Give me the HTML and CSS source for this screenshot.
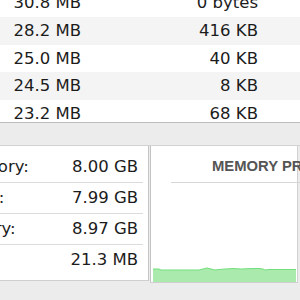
FILE: index.html
```html
<!DOCTYPE html>
<html lang="en">
<head>
<meta charset="UTF-8">
<title>Activity Monitor - Memory</title>
<link rel="stylesheet" href="styles.css">
</head>
<body>

<div class="window">
  <!-- process list (scrolled) -->
  <div class="table">
    <div class="row"><span class="cell mem">30.8 MB</span><span class="cell comp">0 bytes</span></div>
    <div class="row"><span class="cell mem">28.2 MB</span><span class="cell comp">416 KB</span></div>
    <div class="row"><span class="cell mem">25.0 MB</span><span class="cell comp">40 KB</span></div>
    <div class="row"><span class="cell mem">24.5 MB</span><span class="cell comp">8 KB</span></div>
    <div class="row"><span class="cell mem">23.2 MB</span><span class="cell comp">68 KB</span></div>
  </div>

  <div class="toolbar"></div>

  <div class="bottom">
    <div class="stats">
      <div class="stat"><span>Physical Memory:</span><span>8.00 GB</span></div>
      <div class="stat"><span>Memory Used:</span><span>7.99 GB</span></div>
      <div class="stat"><span>Virtual Memory:</span><span>8.97 GB</span></div>
      <div class="stat"><span>Swap Used:</span><span>21.3 MB</span></div>
    </div>

    <div class="chart">
      <div class="chart-title">MEMORY PRESSURE</div>
      <div class="chart-rule"></div>
      <div class="chart-body">
        <svg class="graph" width="143" height="15" viewBox="0 0 143 15">
          <polygon fill="#abeaad" points="0,2 6,2 8,3 46,3 50,2 54,1 58,2 62,3 66,2.5 72,2 80,1.5 88,2 100,1.5 106,1.5 110,2 112,3 116,2.5 143,2.5 143,15 0,15"/>
          <polyline fill="none" stroke="#72df7d" stroke-width="1" points="0,2 6,2 8,3 46,3 50,2 54,1 58,2 62,3 66,2.5 72,2 80,1.5 88,2 100,1.5 106,1.5 110,2 112,3 116,2.5 143,2.5"/>
        </svg>
      </div>
    </div>
  </div>
</div>

</body>
</html>
```

FILE: styles.css
```css
  body {
    margin: 0;
    font-family: "DejaVu Sans", Verdana, sans-serif;
    font-size: 16.5px;
    color: #1c1c1c;
    background-color: #ececec;
    overflow: hidden;
  }
  .window {
    width: 300px;
    height: 300px;
    overflow: hidden;
  }
  .table {
    height: 122px;
    overflow: hidden;
    background-color: #fff;
  }
  .row {
    display: flex;
    height: 27.7px;
    line-height: 27.7px;
    white-space: nowrap;
  }
  .row:first-child {
    margin-top: -10.7px;
  }
  .row:nth-child(even) {
    background-color: #f4f4f4;
  }
  .cell {
    text-align: right;
  }
  .mem {
    width: 81px;
  }
  .comp {
    width: 177px;
  }
  .toolbar {
    height: 22px;
    border-top: 1px solid #bdbdbd;
    border-bottom: 1px solid #d2d2d2;
    background-color: #ececec;
  }
  .bottom {
    display: flex;
    align-items: flex-start;
  }
  .stats {
    box-sizing: border-box;
    width: 279px;
    margin-left: -130px;
    height: 135px;
    padding: 6px 5px 5px 15px;
    background-color: #fff;
    border-right: 1px solid #c4c4c4;
    border-bottom: 1px solid #cfcfcf;
  }
  .stat {
    display: flex;
    justify-content: space-between;
    height: 30px;
    line-height: 30px;
    padding-right: 5px;
    border-bottom: 1px solid #dcdcdc;
    white-space: nowrap;
  }
  .stat:last-child {
    border-bottom: none;
  }
  .chart {
    box-sizing: border-box;
    width: 148px;
    height: 137px;
    margin-left: 1px;
    padding-top: 12px;
    background-color: #fff;
    border-left: 1px solid #c4c4c4;
    border-right: 1px solid #d0d0d0;
    border-bottom: 1px solid #cfcfcf;
    display: flex;
    flex-direction: column;
  }
  .chart-title {
    font-family: "Liberation Sans", Arial, sans-serif;
    font-weight: bold;
    font-size: 14.8px;
    line-height: 17px;
    color: #555;
    padding-left: 61px;
    white-space: nowrap;
  }
  .chart-rule {
    margin: 7px -10px 0 20px;
    border-top: 1px solid #d6d6d6;
  }
  .chart-body {
    flex: 1;
    display: flex;
    align-items: flex-end;
    padding-left: 2px;
  }
  .graph {
    display: block;
  }
```
